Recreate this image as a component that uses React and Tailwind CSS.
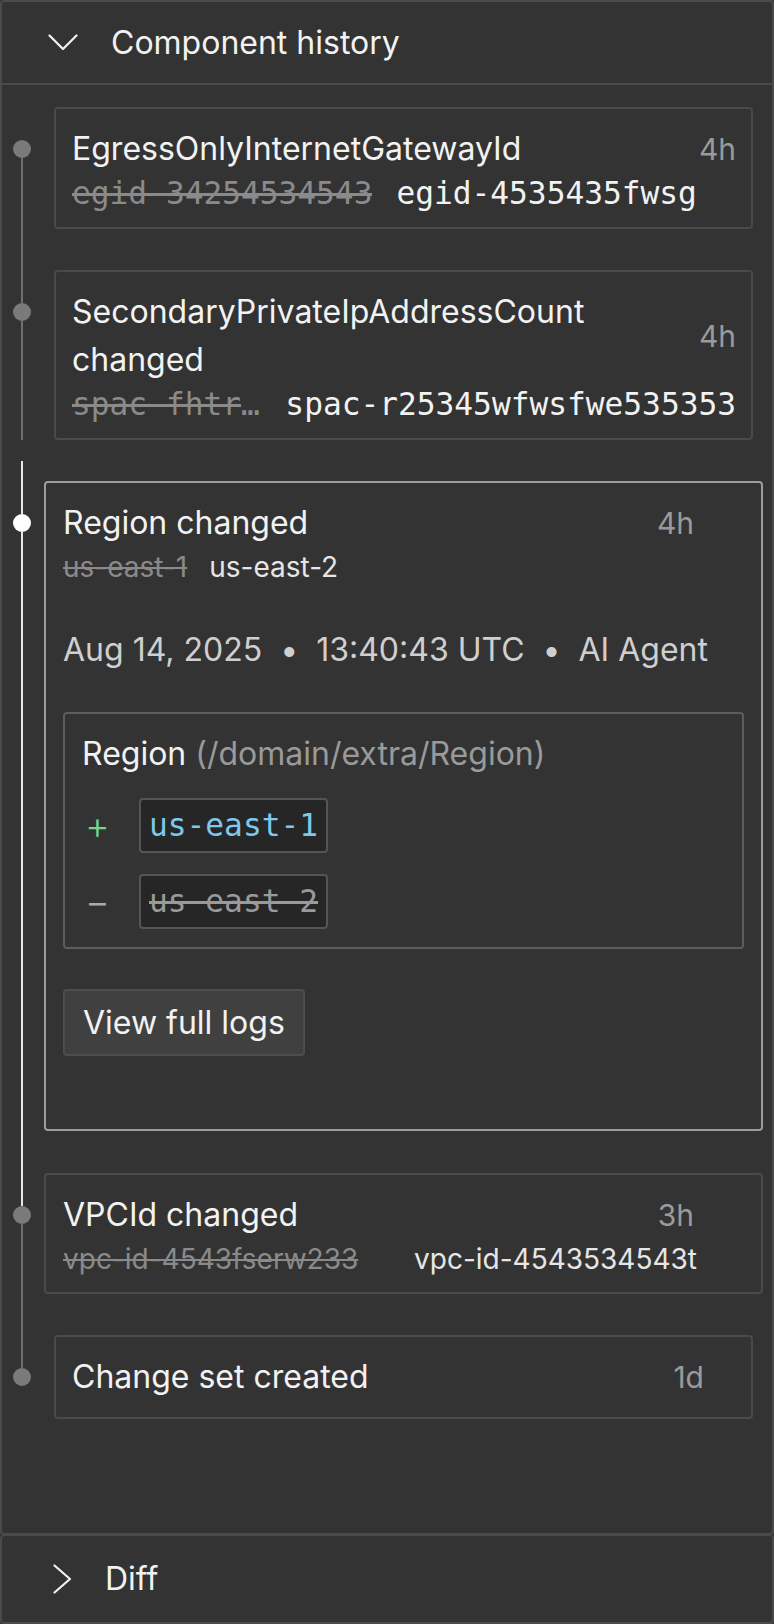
import React from "react";

const mono = "font-['DejaVu_Sans_Mono',monospace]";

const ChevronDown = () => (
  <svg width="30" height="17" viewBox="0 0 30 17" fill="none">
    <polyline points="1.5,1.5 15,15 28.5,1.5" stroke="#f2f2f2" strokeWidth="2.2" strokeLinecap="round" strokeLinejoin="round" />
  </svg>
);

const ChevronRight = () => (
  <svg width="19" height="30" viewBox="0 0 19 30" fill="none">
    <polyline points="1.5,1.5 17,15 1.5,28.5" stroke="#f2f2f2" strokeWidth="2.2" strokeLinecap="round" strokeLinejoin="round" />
  </svg>
);

// left timeline rail: segment above dot, dot, segment below
const Rail = ({ top, dot, bottom, tail }) => (
  <div className="flex w-[39px] shrink-0 flex-col items-center">
    <div className={`h-[33px] w-[2px] ${top}`} />
    <div className={`h-[18px] w-[18px] shrink-0 rounded-full ${dot}`} />
    <div className={`w-[2px] flex-1 ${bottom}`} />
    {tail}
  </div>
);

const Time = ({ children }) => (
  <span className="shrink-0 text-[30px] leading-[48px] text-[#9a9a9a]">{children}</span>
);

const App = () => {
  return (
    <div className="flex h-[1624px] w-[774px] flex-col bg-[#333333] font-['Inter',sans-serif] text-[#f2f2f2]">
      {/* Component history panel */}
      <div className="flex flex-1 flex-col rounded-[4px] border-2 border-[#4a4a4a]">
        <div className="flex h-[83px] items-center gap-[33px] border-b-2 border-[#4a4a4a] pl-[46px]">
          <ChevronDown />
          <span className="text-[32px] leading-[48px]">Component history</span>
        </div>

        <div className="flex flex-1 flex-col pt-[22px]">
          {/* item 1 */}
          <div className="flex">
            <Rail top="bg-transparent" dot="bg-[#7a7a7a]" bottom="bg-[#6e6e6e]" />
            <div className="ml-[13px] mr-[19px] min-w-0 flex-1 pb-[41px]">
              <div className="rounded-[4px] border-2 border-[#4a4a4a] pb-[13px] pl-4 pr-[15px] pt-4">
                <div className="flex items-center justify-between gap-4">
                  <span className="text-[32px] leading-[48px]">EgressOnlyInternetGatewayId</span>
                  <Time>4h</Time>
                </div>
                <div className={`flex gap-[24px] text-[31.2px] leading-[41px] ${mono}`}>
                  <span className="min-w-0 truncate text-[#8a8a8a] line-through">egid-34254534543</span>
                  <span className="shrink-0 text-[#f2f2f2]">egid-4535435fwsg</span>
                </div>
              </div>
            </div>
          </div>

          {/* item 2 */}
          <div className="flex">
            <Rail
              top="bg-[#6e6e6e]"
              dot="bg-[#7a7a7a]"
              bottom="bg-[#6e6e6e]"
              tail={
                <>
                  <div className="h-[21px] w-[2px]" />
                  <div className="h-[20px] w-[2px] bg-[#e6e6e6]" />
                </>
              }
            />
            <div className="ml-[13px] mr-[19px] min-w-0 flex-1 pb-[41px]">
              <div className="rounded-[4px] border-2 border-[#4a4a4a] pb-[13px] pl-4 pr-[15px] pt-4">
                <div className="flex items-center justify-between gap-4">
                  <span className="text-[32px] leading-[48px]">SecondaryPrivateIpAddressCount changed</span>
                  <Time>4h</Time>
                </div>
                <div className={`flex gap-[21px] text-[31.2px] leading-[41px] ${mono}`}>
                  <span className="min-w-0 truncate text-[#8a8a8a] line-through">spac-fhtr4r53453fwe</span>
                  <span className="shrink-0 text-[#f2f2f2]">spac-r25345wfwsfwe535353</span>
                </div>
              </div>
            </div>
          </div>

          {/* item 3 - selected */}
          <div className="flex">
            <Rail top="bg-[#e6e6e6]" dot="bg-white" bottom="bg-[#e6e6e6]" />
            <div className="ml-[3px] mr-[9px] min-w-0 flex-1 pb-[42px]">
              <div className="rounded-[4px] border-2 border-[#9d9d9d] pb-[73px] pl-[17px] pr-[17px] pt-4">
                <div className="flex items-center justify-between pr-[50px]">
                  <span className="text-[32px] leading-[48px]">Region changed</span>
                  <Time>4h</Time>
                </div>
                <div className="flex gap-[22px] text-[28px] leading-[40px]">
                  <span className="text-[#8a8a8a] line-through">us-east-1</span>
                  <span className="text-[#e6e6e6]">us-east-2</span>
                </div>
                <div className="mt-[40px] flex gap-[18px] text-[32px] leading-[45px] text-[#cfcfcf]">
                  <span>Aug 14, 2025</span>
                  <span>•</span>
                  <span>13:40:43 UTC</span>
                  <span>•</span>
                  <span>AI Agent</span>
                </div>

                <div className="mt-[40px] rounded-[4px] border-2 border-[#5c5c5c] pb-[18px] pl-[17px] pr-4 pt-[17px]">
                  <div className="text-[32px] leading-[45px]">
                    Region <span className="text-[#9a9a9a]">(/domain/extra/Region)</span>
                  </div>
                  <div className="mt-[22px] flex items-center">
                    <span className="w-[57px] pl-[3px] text-[38px] font-light leading-[45px] text-[#72d68f]">+</span>
                    <span className={`flex h-[55px] items-center rounded-[4px] border-2 border-[#555555] bg-[#262626] px-[8px] text-[31.2px] text-[#7ec8ec] ${mono}`}>
                      us-east-1
                    </span>
                  </div>
                  <div className="mt-[21px] flex items-center">
                    <span className="w-[57px] pl-[3px] text-[38px] font-light leading-[45px] text-[#aaaaaa]">−</span>
                    <span className={`flex h-[55px] items-center rounded-[4px] border-2 border-[#555555] bg-[#262626] px-[8px] text-[31.2px] text-[#9a9a9a] line-through ${mono}`}>
                      us-east-2
                    </span>
                  </div>
                </div>

                <button className="mt-[40px] flex h-[67px] items-center rounded-[4px] border-2 border-[#4d4d4d] bg-[#404040] px-[18px] text-[32px] text-[#f2f2f2]">
                  View full logs
                </button>
              </div>
            </div>
          </div>

          {/* item 4 */}
          <div className="flex">
            <Rail top="bg-[#e6e6e6]" dot="bg-[#7a7a7a]" bottom="bg-[#6e6e6e]" />
            <div className="ml-[3px] mr-[9px] min-w-0 flex-1 pb-[41px]">
              <div className="rounded-[4px] border-2 border-[#4a4a4a] pb-[13px] pl-[17px] pr-[17px] pt-4">
                <div className="flex items-center justify-between pr-[50px]">
                  <span className="text-[32px] leading-[48px]">VPCId changed</span>
                  <Time>3h</Time>
                </div>
                <div className="grid grid-cols-[330px_1fr] gap-x-[21px] text-[28px] leading-[40px]">
                  <span className="truncate text-[#8a8a8a] line-through">vpc-id-4543fserw233</span>
                  <span className="text-[#e6e6e6]">vpc-id-4543534543t</span>
                </div>
              </div>
            </div>
          </div>

          {/* item 5 */}
          <div className="flex">
            <Rail top="bg-[#6e6e6e]" dot="bg-[#7a7a7a]" bottom="bg-transparent" />
            <div className="ml-[13px] mr-[19px] min-w-0 flex-1">
              <div className="rounded-[4px] border-2 border-[#4a4a4a] pb-4 pl-4 pr-[15px] pt-4">
                <div className="flex items-center justify-between pr-[32px]">
                  <span className="text-[32px] leading-[48px]">Change set created</span>
                  <Time>1d</Time>
                </div>
              </div>
            </div>
          </div>
        </div>
      </div>

      {/* Diff panel */}
      <div className="flex h-[89px] shrink-0 items-center gap-[33px] rounded-[4px] border-2 border-t border-[#4a4a4a] pl-[51px]">
        <ChevronRight />
        <span className="text-[32px] leading-[48px]">Diff</span>
      </div>
    </div>
  );
};

export default App;
